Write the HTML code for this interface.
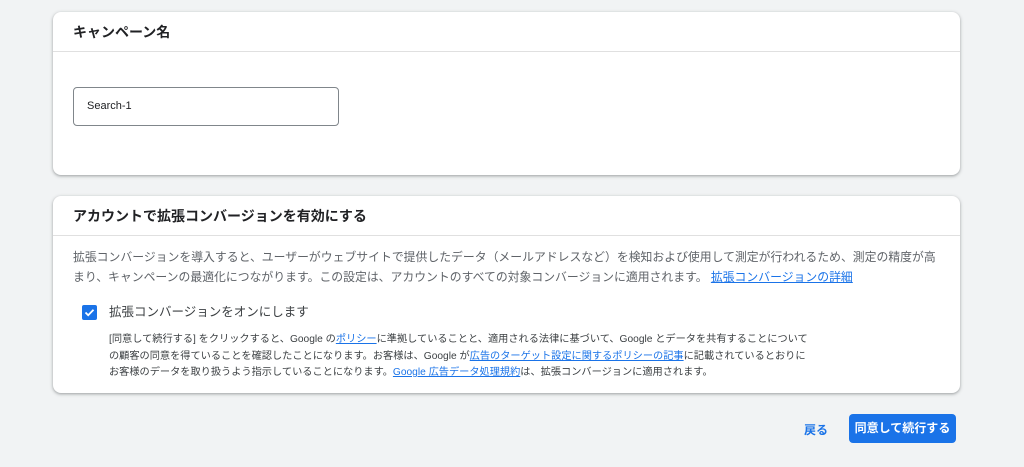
<!DOCTYPE html>
<html><head><meta charset="utf-8"><style>
body{margin:0;width:1024px;height:467px;background:#f1f3f4;font-family:"Liberation Sans","Noto Sans CJK JP",sans-serif;color:#3c4043;position:relative;overflow:hidden}
.card{position:absolute;left:53px;width:907px;background:#fff;border-radius:8px;box-shadow:0 1px 2px rgba(60,64,67,.3),0 1px 3px 1px rgba(60,64,67,.15)}
.hd{height:40px;border-bottom:1px solid #e0e0e0;box-sizing:border-box;padding-left:20px;font-size:14px;font-weight:bold;color:#202124;line-height:40px}
a{color:#1a73e8;text-decoration:underline}
</style></head><body>
<div class="card" style="top:12px;height:163px">
<div class="hd">キャンペーン名</div>
<div style="position:absolute;left:20px;top:75px;width:266px;height:39px;border:1px solid #80868b;border-radius:4px;box-sizing:border-box;font-size:11px;line-height:37px;padding-left:13px;color:#202124">Search-1</div>
</div>
<div class="card" style="top:196px;height:197px">
<div class="hd">アカウントで拡張コンバージョンを有効にする</div>
<div style="position:absolute;left:20px;top:51px;white-space:nowrap;font-size:11.85px;line-height:20px;color:#5f6368">拡張コンバージョンを導入すると、ユーザーがウェブサイトで提供したデータ（メールアドレスなど）を検知および使用して測定が行われるため、測定の精度が高<br>まり、キャンペーンの最適化につながります。この設定は、アカウントのすべての対象コンバージョンに適用されます。 <a>拡張コンバージョンの詳細</a></div>
<div style="position:absolute;left:29px;top:109px;width:15px;height:15px;background:#1a73e8;border-radius:2px"><svg width="15" height="15" viewBox="0 0 15 15"><path d="M3.5 7.5l2.7 2.7 5.3-5.5" stroke="#fff" stroke-width="1.8" fill="none"/></svg></div>
<div style="position:absolute;left:56px;top:107px;font-size:12.5px;line-height:18px;color:#3c4043">拡張コンバージョンをオンにします</div>
<div style="position:absolute;left:56px;top:136px;white-space:nowrap;font-size:10.2px;line-height:16.5px;color:#3c4043">[同意して続行する] をクリックすると、Google の<a>ポリシー</a>に準拠していることと、適用される法律に基づいて、Google とデータを共有することについて<br>の顧客の同意を得ていることを確認したことになります。お客様は、Google が<a>広告のターゲット設定に関するポリシーの記事</a>に記載されているとおりに<br>お客様のデータを取り扱うよう指示していることになります。<a>Google 広告データ処理規約</a>は、拡張コンバージョンに適用されます。</div>
</div>
<div style="position:absolute;left:804px;top:421px;font-size:12px;font-weight:bold;color:#1a73e8">戻る</div>
<div style="position:absolute;left:849px;top:414px;width:107px;height:29px;background:#1a73e8;border-radius:4px;color:#fff;font-size:12px;font-weight:bold;line-height:29px;text-align:center">同意して続行する</div>
</body></html>
